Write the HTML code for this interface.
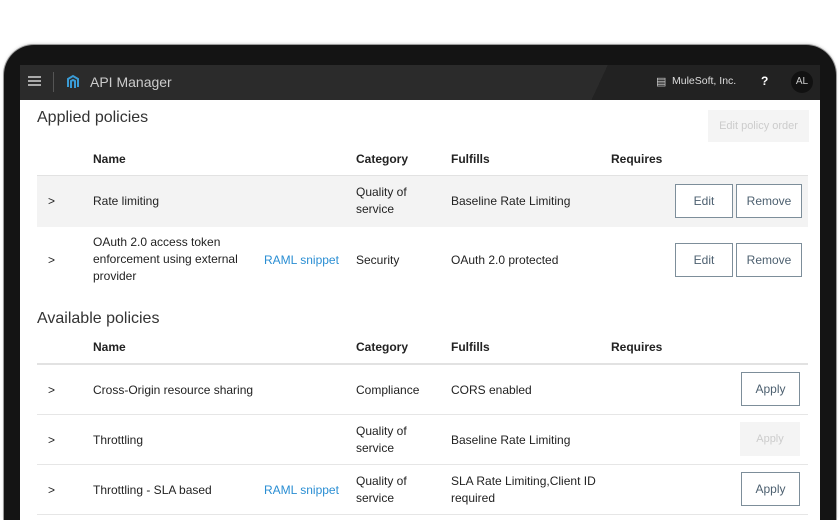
<!DOCTYPE html>
<html style="width:840px;height:520px;overflow:hidden"><head><meta charset="utf-8"><style>
*{margin:0;padding:0;box-sizing:border-box}
body{width:840px;height:520px;background:#fff;position:relative;overflow:hidden;font-family:"Liberation Sans",sans-serif;color:#222;font-size:12px}
.bezel{position:absolute;left:4px;top:45px;width:832px;height:475px;background:#141414;border-radius:30px 30px 0 0;box-shadow:0 0 0 1px #9a9a9a,0 -1px 3px #ccc}
.screen{position:absolute;left:20px;top:65px;width:800px;height:455px;background:#fff;overflow:hidden}
.bar{height:35px;background:linear-gradient(115deg,#2b2b2b 0%,#2b2b2b 72%,#222 72%,#222 100%);position:relative;color:#ddd}
.t{position:absolute;white-space:nowrap}
.btn{position:absolute;border:1px solid #7d8e9a;background:#fff;color:#4d6070;text-align:center;font-size:12px}
.dis{position:absolute;background:#f4f4f4;color:#ccc;text-align:center;font-size:11px}
.h{font-weight:bold}
.line{position:absolute;left:17px;width:771px;height:1px;background:#e6e6e6}
.blue{color:#2a8ed3}
</style></head><body>
<div class="bezel"></div>
<div class="screen">
 <div class="bar">
  <div style="position:absolute;left:8px;top:11px;width:13px;height:1.5px;background:#aaa;box-shadow:0 4px 0 #aaa,0 8px 0 #aaa"></div>
  <div style="position:absolute;left:33px;top:7px;width:1px;height:20px;background:#555"></div>
  <svg style="position:absolute;left:46px;top:8px" width="14" height="18" viewBox="0 0 14 18"><path d="M2 14V6l5-3 5 3v8M5 15V8l2-1 2 1v7" fill="none" stroke="#3a9bd5" stroke-width="2"/></svg>
  <div class="t" style="left:70px;top:9px;font-size:14px;color:#ccc">API Manager</div>
  <div class="t" style="left:636px;top:10px;font-size:11px;color:#ccc">&#9636;</div>
  <div class="t" style="left:652px;top:10px;font-size:10.5px;color:#ddd">MuleSoft, Inc.</div>
  <div class="t" style="left:741px;top:9px;font-size:12px;color:#fff;font-weight:bold">?</div>
  <div style="position:absolute;left:771px;top:6px;width:22px;height:22px;border-radius:50%;background:#111;color:#ccc;font-size:10px;text-align:center;line-height:22px">AL</div>
 </div>
 <div class="t" style="left:17px;top:44px;font-size:16px;color:#333">Applied policies</div>
 <div class="dis" style="left:688px;top:45px;width:101px;height:32px;line-height:32px">Edit policy order</div>
 <div class="t h" style="left:73px;top:87px">Name</div>
 <div class="t h" style="left:336px;top:87px">Category</div>
 <div class="t h" style="left:431px;top:87px">Fulfills</div>
 <div class="t h" style="left:591px;top:87px">Requires</div>
 <div style="position:absolute;left:17px;top:110px;width:771px;height:52px;background:#f3f3f3;border-top:1px solid #e2e2e2"></div>
 <div class="t" style="left:28px;top:129px">&gt;</div>
 <div class="t" style="left:73px;top:129px">Rate limiting</div>
 <div class="t" style="left:336px;top:119px;line-height:17px">Quality of<br>service</div>
 <div class="t" style="left:431px;top:129px">Baseline Rate Limiting</div>
 <div class="btn" style="left:655px;top:119px;width:58px;height:34px;line-height:32px">Edit</div>
 <div class="btn" style="left:716px;top:119px;width:66px;height:34px;line-height:32px">Remove</div>
 <div class="t" style="left:28px;top:188px">&gt;</div>
 <div class="t" style="left:73px;top:169px;line-height:17px">OAuth 2.0 access token<br>enforcement using external<br>provider</div>
 <div class="t blue" style="left:244px;top:188px">RAML snippet</div>
 <div class="t" style="left:336px;top:188px">Security</div>
 <div class="t" style="left:431px;top:188px">OAuth 2.0 protected</div>
 <div class="btn" style="left:655px;top:178px;width:58px;height:34px;line-height:32px">Edit</div>
 <div class="btn" style="left:716px;top:178px;width:66px;height:34px;line-height:32px">Remove</div>
 <div class="t" style="left:17px;top:245px;font-size:16px;color:#333">Available policies</div>
 <div class="t h" style="left:73px;top:275px">Name</div>
 <div class="t h" style="left:336px;top:275px">Category</div>
 <div class="t h" style="left:431px;top:275px">Fulfills</div>
 <div class="t h" style="left:591px;top:275px">Requires</div>
 <div class="line" style="top:298px;height:2px;background:#e2e2e2"></div>
 <div class="t" style="left:28px;top:318px">&gt;</div>
 <div class="t" style="left:73px;top:318px">Cross-Origin resource sharing</div>
 <div class="t" style="left:336px;top:318px">Compliance</div>
 <div class="t" style="left:431px;top:318px">CORS enabled</div>
 <div class="btn" style="left:721px;top:307px;width:59px;height:34px;line-height:32px">Apply</div>
 <div class="line" style="top:349px"></div>
 <div class="t" style="left:28px;top:368px">&gt;</div>
 <div class="t" style="left:73px;top:368px">Throttling</div>
 <div class="t" style="left:336px;top:358px;line-height:17px">Quality of<br>service</div>
 <div class="t" style="left:431px;top:368px">Baseline Rate Limiting</div>
 <div class="dis" style="left:720px;top:357px;width:60px;height:34px;line-height:34px">Apply</div>
 <div class="line" style="top:399px"></div>
 <div class="t" style="left:28px;top:418px">&gt;</div>
 <div class="t" style="left:73px;top:418px">Throttling - SLA based</div>
 <div class="t blue" style="left:244px;top:418px">RAML snippet</div>
 <div class="t" style="left:336px;top:408px;line-height:17px">Quality of<br>service</div>
 <div class="t" style="left:431px;top:408px;line-height:17px">SLA Rate Limiting,Client ID<br>required</div>
 <div class="btn" style="left:721px;top:407px;width:59px;height:34px;line-height:32px">Apply</div>
 <div class="line" style="top:449px"></div>
</div>
</body></html>
